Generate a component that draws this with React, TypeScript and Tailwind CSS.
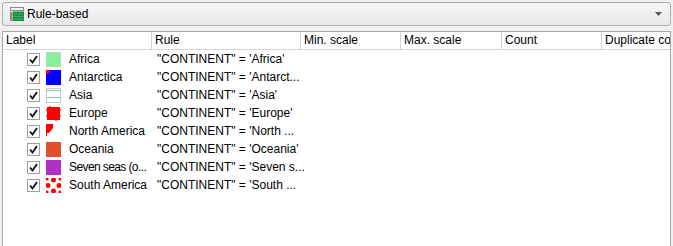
type Row = { label: string; rule: string; swatch: string; tight?: boolean };

const rows: Row[] = [
  { label: "Africa", rule: `"CONTINENT" = 'Africa'`, swatch: "africa" },
  { label: "Antarctica", rule: `"CONTINENT" = 'Antarct...`, swatch: "antarctica" },
  { label: "Asia", rule: `"CONTINENT" = 'Asia'`, swatch: "asia" },
  { label: "Europe", rule: `"CONTINENT" = 'Europe'`, swatch: "europe" },
  { label: "North America", rule: `"CONTINENT" = 'North ...`, swatch: "namerica" },
  { label: "Oceania", rule: `"CONTINENT" = 'Oceania'`, swatch: "oceania" },
  { label: "Seven seas (o...", rule: `"CONTINENT" = 'Seven s...`, swatch: "seas", tight: true },
  { label: "South America", rule: `"CONTINENT" = 'South ...`, swatch: "samerica" },
];

const columns = [
  { name: "Label", w: "w-[149px]" },
  { name: "Rule", w: "w-[149px]" },
  { name: "Min. scale", w: "w-[100px]" },
  { name: "Max. scale", w: "w-[101px]" },
  { name: "Count", w: "w-[100px]" },
  { name: "Duplicate count", w: "w-[120px]" },
];

function Swatch({ kind }: { kind: string }) {
  switch (kind) {
    case "africa":
      return <div className="h-[15px] w-[15px] border border-[#b5d9bd] bg-[#86f09a]" />;
    case "antarctica":
      return (
        <svg width="15" height="15" viewBox="0 0 15 15">
          <rect x="0" y="0" width="15" height="15" fill="#0000ff" />
          <path d="M0 0 H4 A4 4 0 0 1 0 4 Z" fill="#ff0000" />
        </svg>
      );
    case "asia":
      return (
        <svg width="15" height="15" viewBox="0 0 15 15">
          <rect x="0.5" y="0.5" width="14" height="14" fill="#fff" stroke="#c8c8c8" />
          <line x1="0" y1="2.5" x2="15" y2="2.5" stroke="#7fc6bd" />
          <line x1="0" y1="9.5" x2="15" y2="9.5" stroke="#7fc6bd" />
        </svg>
      );
    case "europe":
      return (
        <svg width="15" height="15" viewBox="0 0 15 15">
          <rect x="1" y="1" width="13" height="13" fill="#ff0000" />
          <circle cx="1.5" cy="4" r="1.3" fill="#ff0000" />
          <circle cx="1.5" cy="10" r="1.3" fill="#ff0000" />
          <circle cx="13.5" cy="4" r="1.3" fill="#ff0000" />
          <circle cx="13.5" cy="10" r="1.3" fill="#ff0000" />
          <circle cx="4" cy="1.5" r="1.3" fill="#ff0000" />
          <circle cx="10" cy="13.5" r="1.3" fill="#ff0000" />
        </svg>
      );
    case "namerica":
      return (
        <svg width="15" height="15" viewBox="0 0 15 15">
          <path d="M0 0 H7 V4 L3 9 L1 9 L1 12 L0 12 Z" fill="#ff0000" />
        </svg>
      );
    case "oceania":
      return <div className="h-[15px] w-[15px] bg-[#e4502c]" />;
    case "seas":
      return <div className="h-[15px] w-[15px] bg-[#b12fc5]" />;
    default:
      return (
        <svg width="15" height="15" viewBox="0 0 15 15">
          <rect width="15" height="15" fill="#fff" />
          <circle cx="7.5" cy="2" r="2.5" fill="#ff0000" />
          <circle cx="2" cy="7.5" r="2.5" fill="#ff0000" />
          <circle cx="13" cy="7.5" r="2.5" fill="#ff0000" />
          <circle cx="7.5" cy="13" r="2.5" fill="#ff0000" />
          <circle cx="1" cy="1" r="1.5" fill="#ff0000" />
          <circle cx="14" cy="1" r="1.5" fill="#ff0000" />
          <circle cx="1" cy="14" r="1.5" fill="#ff0000" />
          <circle cx="14" cy="14" r="1.5" fill="#ff0000" />
        </svg>
      );
  }
}

function Check() {
  return (
    <div className="flex h-[13px] w-[13px] items-center justify-center border border-[#a0a0a0] bg-white">
      <svg width="9" height="9" viewBox="0 0 9 9">
        <path d="M1 4.5 L3.5 7.5 L8 1" fill="none" stroke="#111" strokeWidth="1.8" />
      </svg>
    </div>
  );
}

function RuleIcon() {
  return (
    <svg width="14" height="14" viewBox="0 0 14 14">
      <rect x="0.5" y="0.5" width="13" height="3" fill="#f4f4f4" stroke="#8a8a8a" />
      <rect x="0" y="5" width="2" height="9" fill="#8a8a8a" />
      <rect x="3" y="5" width="11" height="4" fill="#1fa84e" stroke="#0c6c2c" strokeWidth="0.8" />
      <rect x="3" y="10" width="11" height="4" fill="#1fa84e" stroke="#0c6c2c" strokeWidth="0.8" />
    </svg>
  );
}

export default function App() {
  return (
    <div className="h-[246px] w-[673px] overflow-hidden bg-[#f0f0f0] px-[2px] pt-[2px] font-['Liberation_Sans',Arial,sans-serif] text-[12px] text-black">
      <div className="flex h-[24px] items-center rounded-[3px] border border-[#adadad] bg-gradient-to-b from-[#f6f6f6] to-[#e8e8e8] pl-[7px] pr-[8px]">
        <RuleIcon />
        <span className="ml-[3px]">Rule-based</span>
        <svg className="ml-auto" width="7" height="4" viewBox="0 0 7 4">
          <path d="M0 0 H7 L3.5 4 Z" fill="#555" />
        </svg>
      </div>
      <div className="mt-[5px] h-[220px] overflow-hidden border border-[#a8a8a8] bg-white">
        <div className="flex h-[18px] border-b border-[#d5d5d5] bg-white">
          {columns.map((c) => (
            <div
              key={c.name}
              className={`${c.w} shrink-0 overflow-hidden whitespace-nowrap border-r border-[#d5d5d5] pl-[3px] leading-[17px]`}
            >
              {c.name}
            </div>
          ))}
        </div>
        <div>
          {rows.map((r) => (
            <div key={r.label} className="flex h-[18px] items-center">
              <div className="flex w-[149px] shrink-0 items-center overflow-hidden">
                <div className="ml-[24px] shrink-0">
                  <Check />
                </div>
                <div className="ml-[6px] shrink-0">
                  <Swatch kind={r.swatch} />
                </div>
                <span className={`ml-[8px] whitespace-nowrap ${r.tight ? "tracking-[-0.6px]" : ""}`}>
                  {r.label}
                </span>
              </div>
              <div className="pl-[5px] whitespace-nowrap">{r.rule}</div>
            </div>
          ))}
        </div>
      </div>
    </div>
  );
}
